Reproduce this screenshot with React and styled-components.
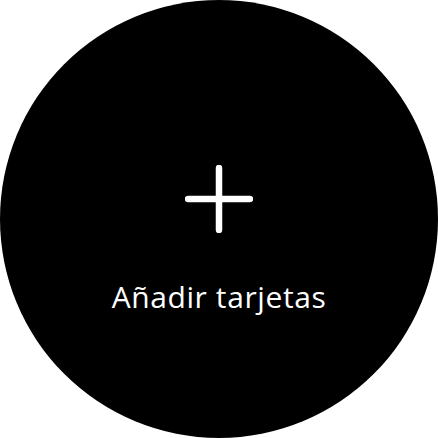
import React from 'react';
import styled, { createGlobalStyle } from 'styled-components';

const GlobalStyle = createGlobalStyle`
  html, body {
    margin: 0;
    padding: 0;
    background: #ffffff;
  }
  body {
    font-family: "Open Sans", "Noto Sans", sans-serif;
  }
`;

const Face = styled.div`
  width: 438px;
  height: 438px;
  border-radius: 50%;
  background: #000000;
  display: flex;
  flex-direction: column;
  align-items: center;
  padding-top: 165px;
  box-sizing: border-box;
`;

const AddButton = styled.button`
  display: flex;
  flex-direction: column;
  align-items: center;
  gap: 49px;
  background: none;
  border: none;
  padding: 0;
  color: #ffffff;
  cursor: pointer;
`;

const Label = styled.span`
  font-family: "Open Sans", "Noto Sans", sans-serif;
  font-size: 30px;
  line-height: 30px;
  letter-spacing: 0.6px;
  color: #ffffff;
`;

const PlusIcon = () => (
  <svg width="68" height="68" viewBox="0 0 68 68" fill="none">
    <path d="M34 3v62M3 34h62" stroke="#fff" strokeWidth="6.5" strokeLinecap="round" />
  </svg>
);

export default function App() {
  return (
    <>
      <GlobalStyle />
      <Face>
        <AddButton>
          <PlusIcon />
          <Label>Añadir tarjetas</Label>
        </AddButton>
      </Face>
    </>
  );
}
